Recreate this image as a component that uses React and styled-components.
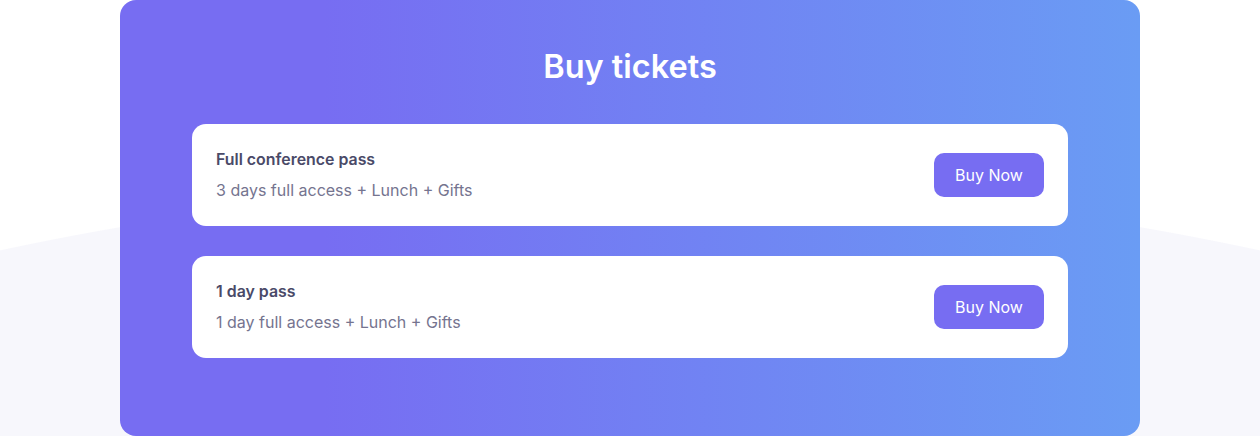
import React from 'react'
import styled, { createGlobalStyle } from 'styled-components'

const GlobalStyle = createGlobalStyle`
  html, body {
    margin: 0;
    padding: 0;
  }
  body {
    font-family: Inter, "Noto Sans", sans-serif;
    -webkit-font-smoothing: antialiased;
  }
`

const Page = styled.div`
  width: 1260px;
  height: 436px;
  overflow: hidden;
  display: flex;
  justify-content: center;
  background: radial-gradient(
    circle 3000px at 630px 3183px,
    #f7f7fc 2999px,
    #ffffff 3000px
  );
`

const Panel = styled.section`
  width: 1020px;
  height: 436px;
  box-sizing: border-box;
  border-radius: 16px;
  padding: 47px 72px 0;
  background: linear-gradient(90deg, #776df2 20%, #6a9cf4 100%);
  display: flex;
  flex-direction: column;
`

const Title = styled.h2`
  margin: 0 0 37px;
  text-align: center;
  color: #ffffff;
  font-size: 32.5px;
  line-height: 40px;
  font-weight: 600;
`

const List = styled.div`
  display: flex;
  flex-direction: column;
  gap: 30px;
`

const Ticket = styled.div`
  height: 102px;
  box-sizing: border-box;
  background: #ffffff;
  border-radius: 14px;
  padding: 0 24px;
  display: flex;
  align-items: center;
  justify-content: space-between;
`

const Info = styled.div`
  display: flex;
  flex-direction: column;
  gap: 7px;
  padding-top: 1px;
`

const Name = styled.div`
  color: #4a4a68;
  font-size: 15.9px;
  line-height: 22px;
  font-weight: 600;
`

const Desc = styled.div`
  color: #75748f;
  font-size: 16px;
  line-height: 24px;
  font-weight: 400;
`

const BuyButton = styled.button`
  width: 110px;
  height: 44px;
  border: none;
  border-radius: 10px;
  background: #776df2;
  color: #ffffff;
  font-family: inherit;
  font-size: 16px;
  font-weight: 400;
  cursor: pointer;
`

const tickets = [
  { name: 'Full conference pass', desc: '3 days full access + Lunch + Gifts' },
  { name: '1 day pass', desc: '1 day full access + Lunch + Gifts' }
]

const App = () => {
  return (
    <Page>
      <GlobalStyle />
      <Panel>
        <Title>Buy tickets</Title>
        <List>
          {tickets.map(t => (
            <Ticket key={t.name}>
              <Info>
                <Name>{t.name}</Name>
                <Desc>{t.desc}</Desc>
              </Info>
              <BuyButton>Buy Now</BuyButton>
            </Ticket>
          ))}
        </List>
      </Panel>
    </Page>
  )
}

export default App
